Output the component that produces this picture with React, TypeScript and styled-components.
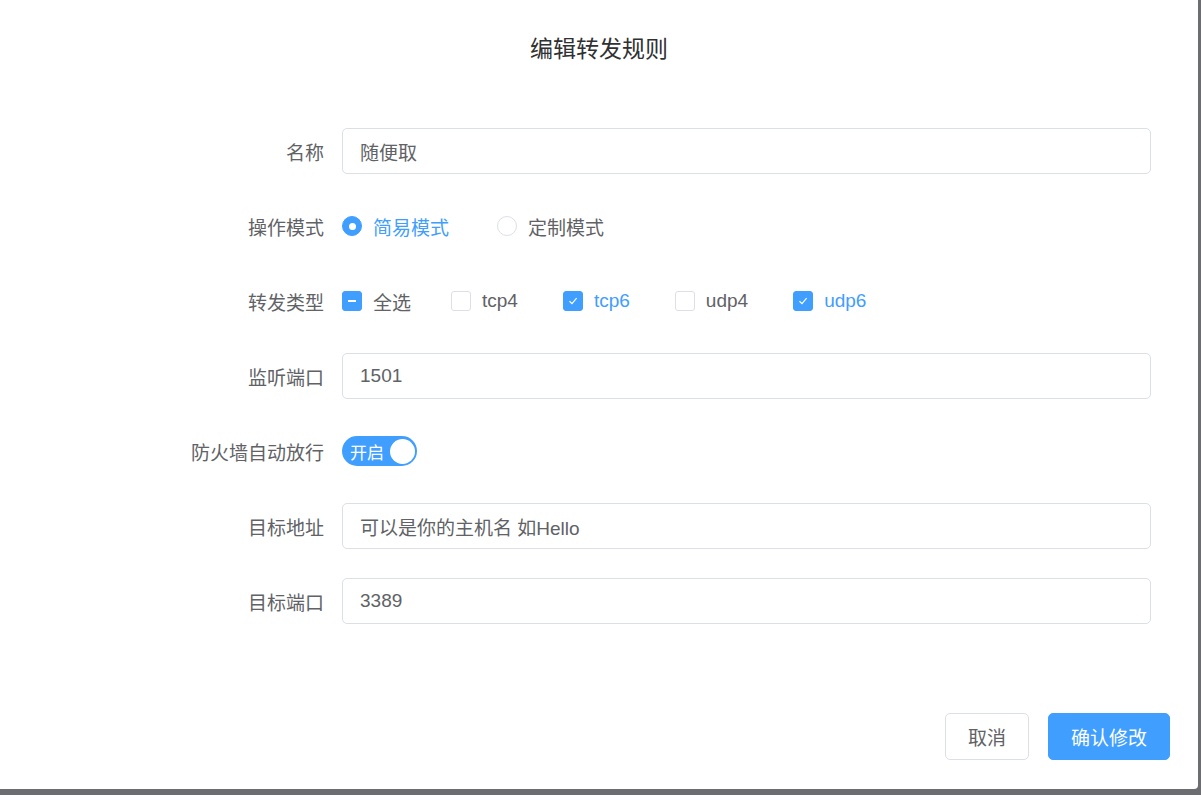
import React from "react";
import styled, { createGlobalStyle } from "styled-components";

const Global = createGlobalStyle`
  html, body { margin: 0; padding: 0; background: #6b6d70; }
  body { font-family: "Liberation Sans", "Noto Sans CJK SC", sans-serif; }
`;

const Page = styled.div`
  width: 1201px;
  height: 795px;
  background: #6b6d70;
  overflow: hidden;
`;

const Dialog = styled.div`
  width: 1198px;
  height: 789px;
  background: #fff;
  border-radius: 0 0 4px 0;
  display: flex;
  flex-direction: column;
`;

const Title = styled.div`
  height: 98px;
  padding-top: 30px;
  box-sizing: border-box;
  text-align: center;
  font-size: 23px;
  color: #303133;
`;

const Form = styled.div`
  display: flex;
  flex-direction: column;
  gap: 29px;
  padding-top: 30px;
`;

const Row = styled.div`
  display: flex;
  align-items: center;
  height: 46px;
`;

const Label = styled.div`
  width: 342px;
  padding-right: 18px;
  box-sizing: border-box;
  text-align: right;
  font-size: 19px;
  color: #606266;
`;

const Input = styled.div`
  width: 809px;
  height: 46px;
  box-sizing: border-box;
  border: 1px solid #dcdfe6;
  border-radius: 5px;
  padding-left: 17px;
  display: flex;
  align-items: center;
  font-size: 19px;
  color: #606266;
`;

const Options = styled.div`
  display: flex;
  align-items: center;
`;

const Option = styled.div<{ $active?: boolean; $gap: number }>`
  display: flex;
  align-items: center;
  gap: 11px;
  margin-right: ${(p) => p.$gap}px;
  font-size: 19px;
  color: ${(p) => (p.$active ? "#409eff" : "#606266")};
`;

const Radio = styled.span<{ $on?: boolean }>`
  width: 20px;
  height: 20px;
  border-radius: 50%;
  box-sizing: border-box;
  border: 1px solid ${(p) => (p.$on ? "#409eff" : "#dcdfe6")};
  background: ${(p) => (p.$on ? "#409eff" : "#fff")};
  display: flex;
  align-items: center;
  justify-content: center;
  &::after {
    content: "";
    width: 7px;
    height: 7px;
    border-radius: 50%;
    background: #fff;
    display: ${(p) => (p.$on ? "block" : "none")};
  }
`;

const Box = styled.span<{ $on?: boolean }>`
  width: 20px;
  height: 20px;
  border-radius: 3px;
  box-sizing: border-box;
  border: 1px solid ${(p) => (p.$on ? "#409eff" : "#dcdfe6")};
  background: ${(p) => (p.$on ? "#409eff" : "#fff")};
  display: flex;
  align-items: center;
  justify-content: center;
`;

const Switch = styled.div`
  width: 75px;
  height: 30px;
  border-radius: 15px;
  background: #409eff;
  display: flex;
  align-items: center;
  justify-content: space-between;
  padding: 0 2px 0 8px;
  box-sizing: border-box;
  color: #fff;
  font-size: 17px;
  &::after {
    content: "";
    width: 25px;
    height: 25px;
    border-radius: 50%;
    background: #fff;
  }
`;

const Footer = styled.div`
  margin-top: auto;
  display: flex;
  justify-content: flex-end;
  gap: 19px;
  padding: 0 28px 29px 0;
`;

const Button = styled.button<{ $primary?: boolean }>`
  height: 47px;
  padding: 0 22px;
  border-radius: 5px;
  font-family: inherit;
  font-size: 19px;
  border: 1px solid ${(p) => (p.$primary ? "#409eff" : "#dcdfe6")};
  background: ${(p) => (p.$primary ? "#409eff" : "#fff")};
  color: ${(p) => (p.$primary ? "#fff" : "#606266")};
`;

const Check = () => (
  <svg width="12" height="12" viewBox="0 0 12 12">
    <path d="M2.5 6.2 L5 8.6 L9.6 3.2" stroke="#fff" strokeWidth="1.2" fill="none" />
  </svg>
);

const Dash = () => (
  <svg width="12" height="12" viewBox="0 0 12 12">
    <rect x="2" y="5" width="8" height="2" fill="#fff" />
  </svg>
);

const types = [
  { name: "tcp4", on: false, gap: 45 },
  { name: "tcp6", on: true, gap: 45 },
  { name: "udp4", on: false, gap: 45 },
  { name: "udp6", on: true, gap: 0 },
];

export default function App() {
  return (
    <Page>
      <Global />
      <Dialog>
        <Title>编辑转发规则</Title>
        <Form>
          <Row>
            <Label>名称</Label>
            <Input>随便取</Input>
          </Row>
          <Row>
            <Label>操作模式</Label>
            <Options>
              <Option $active $gap={48}>
                <Radio $on />
                简易模式
              </Option>
              <Option $gap={0}>
                <Radio />
                定制模式
              </Option>
            </Options>
          </Row>
          <Row>
            <Label>转发类型</Label>
            <Options>
              <Option $gap={40}>
                <Box $on>
                  <Dash />
                </Box>
                全选
              </Option>
              {types.map((t) => (
                <Option key={t.name} $active={t.on} $gap={t.gap}>
                  <Box $on={t.on}>{t.on && <Check />}</Box>
                  {t.name}
                </Option>
              ))}
            </Options>
          </Row>
          <Row>
            <Label>监听端口</Label>
            <Input>1501</Input>
          </Row>
          <Row>
            <Label>防火墙自动放行</Label>
            <Switch>开启</Switch>
          </Row>
          <Row>
            <Label>目标地址</Label>
            <Input>可以是你的主机名 如Hello</Input>
          </Row>
          <Row>
            <Label>目标端口</Label>
            <Input>3389</Input>
          </Row>
        </Form>
        <Footer>
          <Button>取消</Button>
          <Button $primary>确认修改</Button>
        </Footer>
      </Dialog>
    </Page>
  );
}
